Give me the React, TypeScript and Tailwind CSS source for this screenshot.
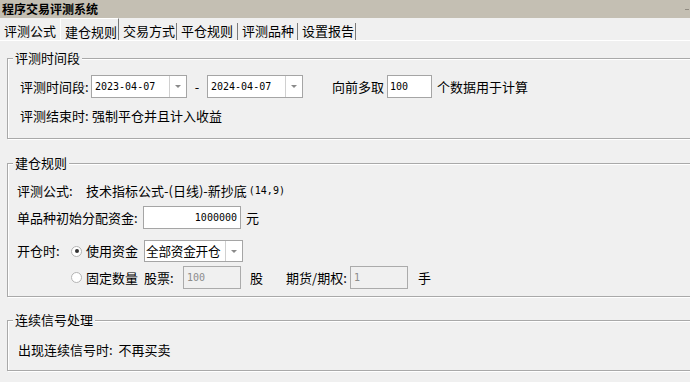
import React from 'react';

const mono = "font-['DejaVu_Sans_Mono',monospace] text-[10px]";

const Caret = () => (
  <div className="w-0 h-0 border-x-[3px] border-x-transparent border-t-[3px] border-t-[#8a8a8a]" />
);

const ComboBox: React.FC<{ value: string; width: string; monoText?: boolean }> = ({ value, width, monoText }) => (
  <div className={`flex h-full border border-[#a5a5a5] bg-white ${width}`}>
    <div
      className={`flex-1 flex items-center whitespace-nowrap overflow-hidden ${
        monoText ? `pl-[3px] ${mono}` : 'pl-[1px] text-[12.6px] tracking-[-0.2px]'
      }`}
    >
      {value}
    </div>
    <div className="w-[17px] border-l border-[#d0d0d0] flex items-center justify-center">
      <Caret />
    </div>
  </div>
);

const Radio: React.FC<{ checked?: boolean }> = ({ checked }) => (
  <div className="w-[11px] h-[11px] rounded-full border border-[#b4b4b4] bg-white flex items-center justify-center">
    {checked && <div className="w-[4px] h-[4px] rounded-full bg-[#333]" />}
  </div>
);

const GroupBox: React.FC<{ title: string; className: string; children: React.ReactNode }> = ({ title, className, children }) => (
  <div
    className={`ml-[7px] mr-[-10px] border border-[#a9a9a9] shadow-[inset_1px_1px_0_#fff,1px_1px_0_#fff] ${className}`}
  >
    <div className="-mt-[9px] ml-[5px] px-[2px] w-fit bg-[#f0f0f0] leading-[16px]">{title}</div>
    {children}
  </div>
);

const tabs = ['评测公式', '建仓规则', '交易方式', '平仓规则', '评测品种', '设置报告'];
const tabWidths = ['w-[60px]', 'w-[59px]', 'w-[58px]', 'w-[61px]', 'w-[60px]', 'w-[58px]'];

export default function App() {
  return (
    <div className="w-[690px] h-[382px] overflow-hidden bg-[#f0f0f0] text-black text-[13px] font-['Noto_Sans_CJK_SC',sans-serif]">
      {/* title bar */}
      <div className="h-[18px] bg-[#c4bfb3] flex items-center pl-[2px] text-[12px] font-bold leading-[18px]">
        程序交易评测系统
        <div className="ml-auto mr-[1px] w-[4px] h-[1px] bg-[#8f8a80]" />
      </div>

      {/* tab strip */}
      <div className="h-[23px] flex items-end border-b border-white">
        {tabs.map((t, i) => {
          const active = i === 1;
          return (
            <div
              key={t}
              className={`${tabWidths[i]} leading-[16px] whitespace-nowrap ${
                active
                  ? 'h-[22px] pt-[5px] pl-[4px] border-l border-t border-white border-r border-r-[#7a7a7a]'
                  : `h-[17px] ${i === 0 ? 'pl-[4px]' : 'pl-[4px] border-r border-[#7a7a7a]'}`
              }`}
            >
              {t}
            </div>
          );
        })}
      </div>

      <div className="pt-[17px]">
        {/* group 1 */}
        <GroupBox title="评测时间段" className="h-[81px]">
          <div className="mt-[9px] h-[23px] flex items-center pl-[12px] leading-[16px]">
            <span className="w-[71px] whitespace-nowrap">评测时间段:</span>
            <ComboBox value="2023-04-07" width="w-[96px]" monoText />
            <span className="w-[20px] text-center">-</span>
            <ComboBox value="2024-04-07" width="w-[96px]" monoText />
            <span className="ml-[29px] whitespace-nowrap">向前多取</span>
            <div className={`ml-[3px] w-[45px] h-full border border-[#a5a5a5] bg-white pl-[2px] flex items-center ${mono}`}>
              100
            </div>
            <span className="ml-[5px] whitespace-nowrap">个数据用于计算</span>
          </div>
          <div className="mt-[10px] flex pl-[12px] leading-[16px] whitespace-nowrap">
            <span className="w-[72px]">评测结束时:</span>
            <span>强制平仓并且计入收益</span>
          </div>
        </GroupBox>

        {/* group 2 */}
        <GroupBox title="建仓规则" className="mt-[24px] h-[134px]">
          <div className="mt-[12px] flex items-center pl-[9px] leading-[16px] whitespace-nowrap">
            <span className="w-[69px]">评测公式:</span>
            <span>技术指标公式-(日线)-新抄底</span>
            <span className={`ml-[2px] ${mono}`}>(14,9)</span>
          </div>
          <div className="mt-[7px] h-[23px] flex items-center pl-[9px] leading-[16px] whitespace-nowrap">
            <span className="w-[126px]">单品种初始分配资金:</span>
            <div className={`w-[98px] h-full border border-[#a5a5a5] bg-white pr-[3px] flex items-center justify-end ${mono}`}>
              1000000
            </div>
            <span className="ml-[5px]">元</span>
          </div>
          <div className="mt-[11px] h-[22px] flex items-center pl-[9px] leading-[16px] whitespace-nowrap">
            <span className="w-[51px]">开仓时:</span>
            <div className="ml-[3px]">
              <Radio checked />
            </div>
            <span className="ml-[4px]">使用资金</span>
            <div className="ml-[6px] h-full">
              <ComboBox value="全部资金开仓" width="w-[99px]" />
            </div>
          </div>
          <div className="mt-[4px] h-[23px] flex items-center pl-[9px] leading-[16px] whitespace-nowrap">
            <span className="w-[51px]" />
            <div className="ml-[3px]">
              <Radio />
            </div>
            <span className="ml-[4px]">固定数量</span>
            <span className="ml-[6px] w-[39px]">股票:</span>
            <div className={`w-[58px] h-full border border-[#ababab] pl-[3px] flex items-center text-[#8c8c8c] ${mono}`}>
              100
            </div>
            <span className="ml-[9px]">股</span>
            <span className="ml-[23px] w-[64px]">期货/期权:</span>
            <div className={`w-[58px] h-full border border-[#ababab] pl-[3px] flex items-center text-[#8c8c8c] ${mono}`}>
              1
            </div>
            <span className="ml-[10px]">手</span>
          </div>
        </GroupBox>

        {/* group 3 */}
        <GroupBox title="连续信号处理" className="mt-[23px] h-[51px]">
          <div className="mt-[14px] pl-[10px] leading-[16px] whitespace-nowrap">出现连续信号时:&nbsp; 不再买卖</div>
        </GroupBox>
      </div>
    </div>
  );
}
